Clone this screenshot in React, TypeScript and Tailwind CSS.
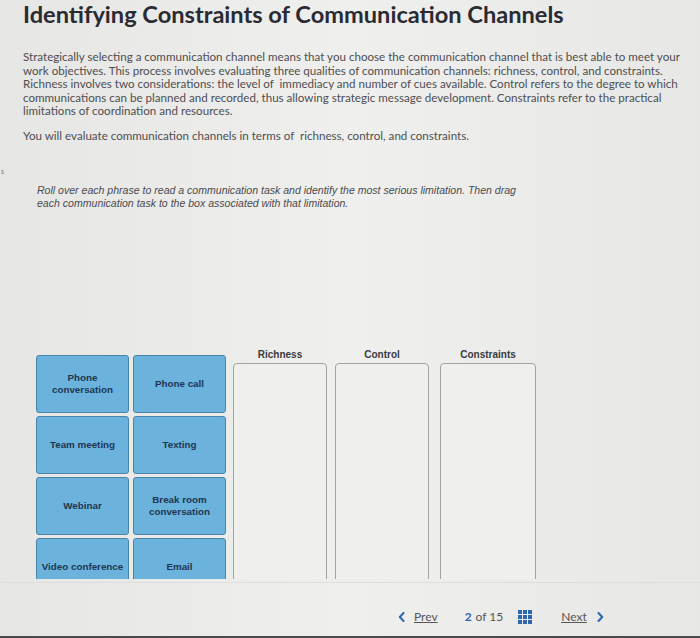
import React from 'react'

const tiles = [
  ['Phone conversation', 'Phone call'],
  ['Team meeting', 'Texting'],
  ['Webinar', 'Break room conversation'],
  ['Video conference', 'Email'],
]

const buckets = [
  { label: 'Richness', w: 'w-[94px]', ml: 'ml-0' },
  { label: 'Control', w: 'w-[94px]', ml: 'ml-[8px]' },
  { label: 'Constraints', w: 'w-[96px]', ml: 'ml-[11px]' },
]

function Tile({ text }: { text: string }) {
  return (
    <div className="flex h-[58px] w-[93px] items-center justify-center rounded-[3px] border border-[#4a84aa] bg-[#6bb3dc] px-1 text-center text-[9.8px] font-bold leading-[12px] text-[#1e3653]">
      {text}
    </div>
  )
}

function GridIcon() {
  return (
    <svg width="14" height="14" viewBox="0 0 14 14" className="block">
      {[0, 5, 10].map((y) =>
        [0, 5, 10].map((x) => <rect key={`${x}-${y}`} x={x} y={y} width="4" height="4" fill="#2f66b0" />)
      )}
    </svg>
  )
}

function Chevron({ dir }: { dir: 'left' | 'right' }) {
  return (
    <svg width="7" height="10" viewBox="0 0 7 10" className="block">
      <path
        d={dir === 'left' ? 'M5.5 1 L1.8 5 L5.5 9' : 'M1.5 1 L5.2 5 L1.5 9'}
        fill="none"
        stroke="#2f66b0"
        strokeWidth="2"
        strokeLinecap="round"
        strokeLinejoin="round"
      />
    </svg>
  )
}

export default function App() {
  return (
    <div className="flex h-[638px] w-[700px] flex-col overflow-hidden bg-gradient-to-r from-[#e6e6e4] via-[#efefed] to-[#e7e8e6] font-['Lato',sans-serif]">
      <h1 className="pl-[23px] text-[23.6px] font-bold leading-[28px] text-[#2a2a33]">
        Identifying Constraints of Communication Channels
      </h1>

      <p className="mt-[22px] pl-[23px] text-[11.6px] leading-[13.6px] text-[#4e4e52]">
        Strategically selecting a communication channel means that you choose the communication channel that is best able to meet your
        <br />
        work objectives. This process involves evaluating three qualities of communication channels: richness, control, and constraints.
        <br />
        Richness involves two considerations: the level of&nbsp; immediacy and number of cues available. Control refers to the degree to which
        <br />
        communications can be planned and recorded, thus allowing strategic message development. Constraints refer to the practical
        <br />
        limitations of coordination and resources.
      </p>
      <p className="mt-[11px] pl-[23px] text-[11.6px] leading-[13.6px] text-[#4e4e52]">
        You will evaluate communication channels in terms of&nbsp; richness, control, and constraints.
      </p>

      <div className="mt-[23px] h-[10px] pl-[1px] text-[7px] leading-[10px] text-[#777]">s</div>

      <p className="mt-[8px] pl-[37px] font-['Liberation_Sans',sans-serif] text-[10.55px] italic leading-[13px] text-[#4a4a4e]">
        Roll over each phrase to read a communication task and identify the most serious limitation. Then drag
        <br />
        each communication task to the box associated with that limitation.
      </p>

      <div className="mt-[137px] flex h-[232px] shrink-0 overflow-hidden pl-[36px] font-['Liberation_Sans',sans-serif]">
        <div className="grid shrink-0 grid-cols-2 content-start gap-x-[4px] gap-y-[3px] pt-[8px]">
          {tiles.flat().map((t) => (
            <Tile key={t} text={t} />
          ))}
        </div>
        <div className="ml-[7px] flex items-start">
          {buckets.map((b) => (
            <div key={b.label} className={`${b.w} ${b.ml} flex shrink-0 flex-col`}>
              <div className="h-[16px] shrink-0 text-center text-[10px] font-bold leading-[16px] text-[#3a3a3e]">{b.label}</div>
              <div className="h-[260px] shrink-0 rounded-t-[4px] border border-[#a3a3a1] bg-[#efefed]" />
            </div>
          ))}
        </div>
      </div>

      <div className="mt-[3px] h-px shrink-0 bg-[#dededc]" />

      <div className="mt-[24px] flex h-[20px] shrink-0 items-center pl-[398px] text-[12px] text-[#555]">
        <Chevron dir="left" />
        <span className="ml-[9px] underline">Prev</span>
        <span className="ml-[27px] font-bold text-[#2f66b0]">2</span>
        <span className="ml-[4px]">of 15</span>
        <span className="ml-[15px]">
          <GridIcon />
        </span>
        <span className="ml-[29px] underline">Next</span>
        <span className="ml-[10px]">
          <Chevron dir="right" />
        </span>
      </div>

      <div className="mt-auto h-[2px] shrink-0 bg-[#4a4a4c]" />
    </div>
  )
}
